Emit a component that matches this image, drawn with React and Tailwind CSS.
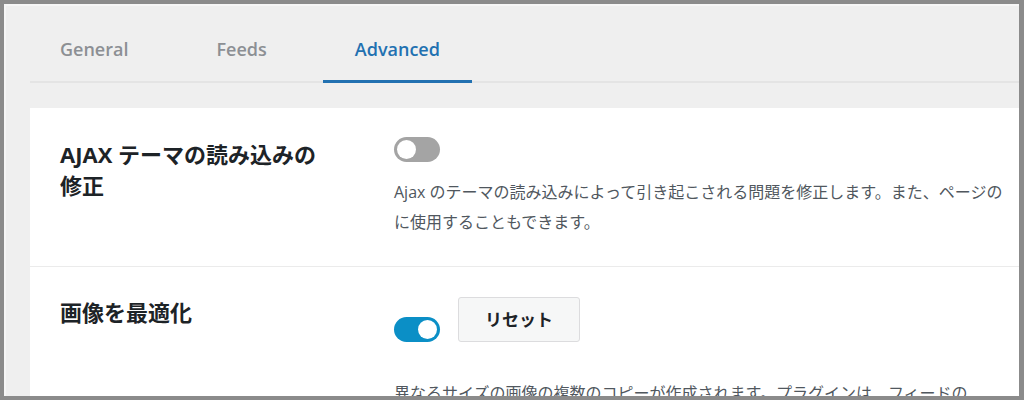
function Toggle({ on }) {
  return (
    <span
      className={
        on
          ? 'inline-flex h-[25px] w-[46px] shrink-0 items-center justify-end rounded-full bg-[#0b8fc6] px-[3px]'
          : 'inline-flex h-[25px] w-[46px] shrink-0 items-center justify-start rounded-full bg-[#a4a4a4] px-[3px]'
      }
    >
      <span className="h-[19px] w-[19px] rounded-full bg-white" />
    </span>
  );
}

const tabs = [
  { name: 'General' },
  { name: 'Feeds' },
  { name: 'Advanced', active: true },
];

export default function App() {
  return (
    <div className="h-[400px] w-[1024px] overflow-hidden bg-[#8b8b8b] pb-[4px] pl-[4px] pr-[5px] pt-[4px] font-['Open_Sans','Noto_Sans_CJK_JP',sans-serif]">
      <div className="flex h-full flex-col overflow-hidden border-l-2 border-t-2 border-[#f6f6f6] bg-[#efefef] pl-[24px]">
        {/* tab bar */}
        <div className="flex shrink-0 gap-6 border-b-2 border-[#e4e4e4]">
          {tabs.map((t, i) => (
            <div
              key={t.name}
              className={
                (i === 0 ? '-ml-[2px] ' : '') +
                (t.active
                  ? '-mb-[2px] border-b-[3px] border-[#2271b1] px-8 pb-[19px] pt-[31px] text-[18px] font-semibold leading-6 text-[#2271b1]'
                  : '-mb-[2px] border-b-[3px] border-transparent px-8 pb-[19px] pt-[31px] text-[18px] font-semibold leading-6 text-[#8c8f94]')
              }
            >
              {t.name}
            </div>
          ))}
        </div>

        {/* settings card */}
        <div className="mt-[25px] flex flex-1 flex-col bg-white">
          <div className="flex border-b border-[#ebebeb] pb-[29px] pl-[30px] pt-[29px]">
            <div className="w-[334px] shrink-0">
              <div className="mt-[2px] w-[262px] text-[22px] font-bold leading-[31px] text-[#1d2327]">
                AJAX テーマの読み込みの修正
              </div>
            </div>
            <div className="flex flex-col items-start">
              <Toggle />
              <div className="mt-[15px] whitespace-nowrap text-[16px] leading-[30px] text-[#50575e]">
                <div>Ajax のテーマの読み込みによって引き起こされる問題を修正します。また、ページの</div>
                <div>に使用することもできます。</div>
              </div>
            </div>
          </div>

          <div className="flex pl-[30px] pt-[30px]">
            <div className="w-[334px] shrink-0">
              <div className="w-[262px] text-[22px] font-bold leading-[31px] text-[#1d2327]">画像を最適化</div>
            </div>
            <div className="flex flex-col items-start">
              <div className="flex items-end gap-[18px]">
                <Toggle on />
                <button className="h-[45px] w-[122px] rounded-[3px] border border-[#dcdcde] bg-[#f6f7f7] text-[17px] font-bold text-[#1d2327]">
                  リセット
                </button>
              </div>
              <div className="mt-[36px] whitespace-nowrap text-[16px] leading-[30px] text-[#50575e]">
                異なるサイズの画像の複数のコピーが作成されます。プラグインは、フィードの
              </div>
            </div>
          </div>
        </div>
      </div>
    </div>
  );
}
